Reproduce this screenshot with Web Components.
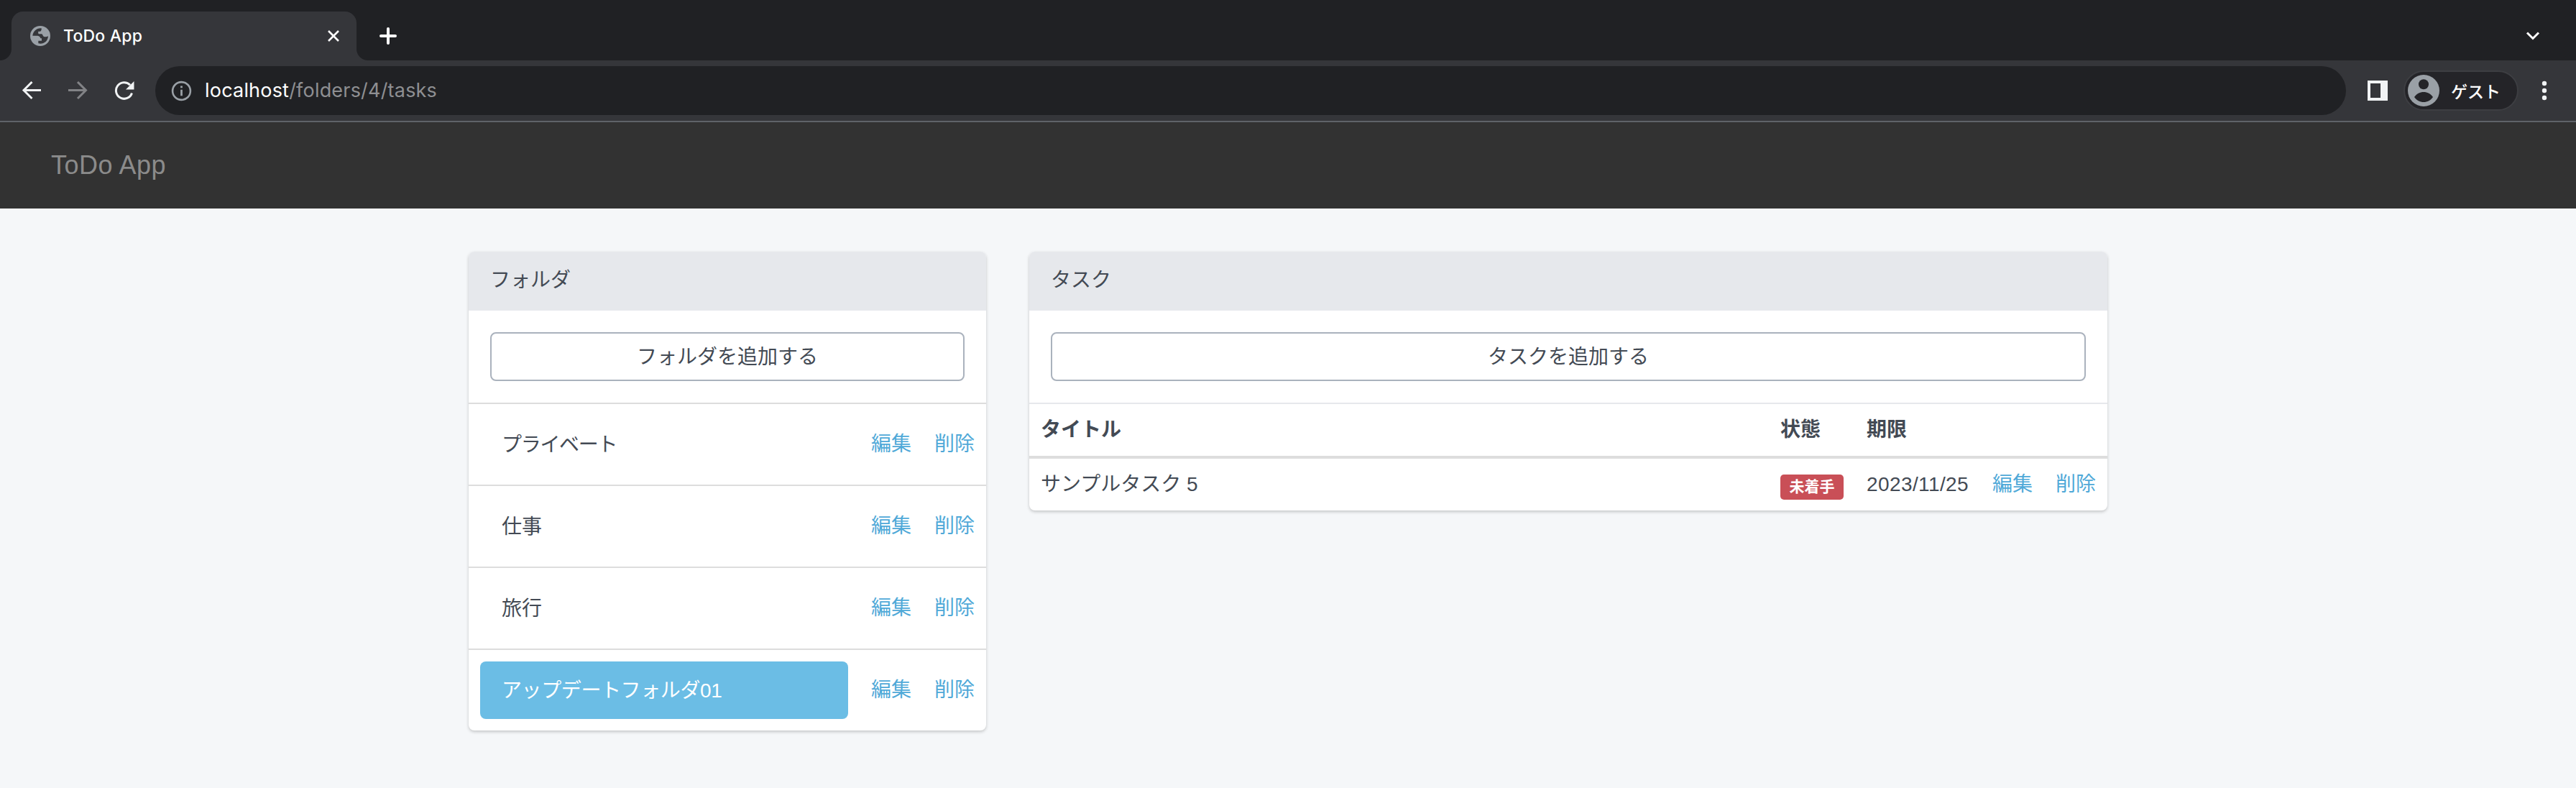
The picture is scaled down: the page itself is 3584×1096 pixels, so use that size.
<!DOCTYPE html>
<html lang="ja"><head><meta charset="utf-8"><title>ToDo App</title>
<style>
body{margin:0;background:#f5f7f9;font-family:"Liberation Sans","Noto Sans CJK JP",sans-serif;color:#434a54;font-size:28px;height:1096px;overflow:hidden}
main{width:2280px;margin:60px auto 0;display:flex;gap:60px;align-items:flex-start}
</style></head><body>
<browser-chrome></browser-chrome>
<app-navbar>ToDo App</app-navbar>
<main>
<app-panel heading="フォルダ" action="フォルダを追加する" style="width:720px">
<folder-row style="letter-spacing:-1.3px">プライベート</folder-row><folder-row>仕事</folder-row><folder-row>旅行</folder-row><folder-row active>アップデートフォルダ01</folder-row>
</app-panel>
<app-panel heading="タスク" action="タスクを追加する" style="width:1500px"><task-table></task-table></app-panel>
</main>
<script>
const define=(name,html)=>customElements.define(name,class extends HTMLElement{
 connectedCallback(){
  if(this.shadowRoot)return;
  const t=document.createElement('template');
  t.innerHTML=html.replace(/\{\{(\w+)\}\}/g,(m,k)=>this.getAttribute(k)||'');
  this.attachShadow({mode:'open'}).append(t.content.cloneNode(true));}});

define('browser-chrome',`<style>
:host{display:block;color:#fff}
svg{display:block;flex:none}
.strip{height:84px;background:#202124;display:flex;align-items:flex-end}
.tab{width:480px;height:68px;margin-left:16px;background:#35363a;border-radius:16px 16px 0 0;display:flex;align-items:center;position:relative;font:500 23px Inter,"Liberation Sans",sans-serif;flex:none}
.tab:before,.tab:after{content:"";position:absolute;bottom:0;width:16px;height:16px}
.tab:before{left:-16px;background:radial-gradient(circle at 0 0,#202124 15.5px,#35363a 16.5px)}
.tab:after{right:-16px;background:radial-gradient(circle at 100% 0,#202124 15.5px,#35363a 16.5px)}
.globe{margin-left:26px}.name{margin-left:18px;letter-spacing:.2px;flex:1}
.x{margin-right:24px}.plus{margin:0 0 22px 32px}.down{margin:0 50px 28px auto}
.bar{height:84px;background:#35363a;border-bottom:2px solid #5f6368;display:flex;align-items:center}
.back{margin-left:30px}.fwd{margin-left:37px}.re{margin-left:36px}
.url{margin-left:28px;width:3048px;height:68px;border-radius:34px;background:#202124;display:flex;align-items:center;font:400 27px Inter,"Liberation Sans",sans-serif}
.url svg{margin-left:22px}.url span{margin:-1px 0 0 18px;color:#8e8f92;letter-spacing:.2px}.url b{font-weight:400;color:#fff}
.side{margin-left:30px}
.guest{margin-left:22px;box-sizing:border-box;width:160px;height:56px;border:2px solid #3d3e42;border-radius:28px;background:#242428;display:flex;align-items:center;font:500 23px "Noto Sans CJK JP",sans-serif}
.guest svg{margin:0 16px 0 4px}.guest span{margin-top:-1px}
.dots{margin-left:32px}
</style>
<div class="strip"><div class="tab">
<svg class="globe" width="28" height="28" viewBox="0 0 84 84"><circle cx="42" cy="42" r="42" fill="#9aa0a6"/><path d="M47 10C28 8 12 22 10 41H27C38 41 42 46 43 52H48V62H34V73C54 78 74 66 75 43C69 46 62 47 56 44C52 41 52 36 49 34H36C33 32 33 27 34 23H42C46 22 48 16 47 10z" fill="#35363a"/></svg>
<span class="name">ToDo App</span>
<svg class="x" width="16" height="16" viewBox="0 0 16 16" stroke="#fff" stroke-width="2.600"><path d="M1 1l14 14M15 1L1 15"/></svg></div>
<svg class="plus" width="24" height="24" viewBox="0 0 24 24" stroke="#fff" stroke-width="4" stroke-linecap="round"><path d="M12 2v20M2 12h20"/></svg>
<svg class="down" width="20" height="12" viewBox="0 0 20 12" fill="none" stroke="#fff" stroke-width="3"><path d="M2 1.500l8 8 8-8"/></svg></div>
<div class="bar">
<svg class="back" width="28" height="26" viewBox="0 0 28 26" fill="none" stroke="#f1f3f4" stroke-width="3"><path d="M27 12.500H4M14.500 1L3 12.500 14.500 24"/></svg>
<svg class="fwd" width="28" height="26" viewBox="0 0 28 26" fill="none" stroke="#828386" stroke-width="3"><path d="M0 12.500h25M13 1L24.500 12.500 13 24"/></svg>
<svg class="re" width="29" height="28" viewBox="0 0 29 28"><path d="M24.500 17.500A11.300 11.300 0 1 1 22 6.300" fill="none" stroke="#f1f3f4" stroke-width="3"/><path d="M27.500 1v11.500H16z" fill="#f1f3f4"/></svg>
<div class="url"><svg width="29" height="29" viewBox="0 0 29 29"><circle cx="14.500" cy="14.500" r="12.400" fill="none" stroke="#9aa0a6" stroke-width="2.600"/><path d="M13.100 7.500h2.800v2.800h-2.800zM13.100 12.800h2.800v8.500h-2.800z" fill="#9aa0a6"/></svg><span><b>localhost</b>/folders/4/tasks</span></div>
<svg class="side" width="28" height="28" viewBox="0 0 28 28"><path d="M0 0h28v28H0zM4 4v20h14V4z" fill="#f1f3f4" fill-rule="evenodd"/></svg>
<div class="guest"><svg width="44" height="44" viewBox="0 0 44 44"><circle cx="22" cy="22" r="22" fill="#9aa0a6"/><circle cx="22" cy="13.300" r="7" fill="#242428"/><path d="M9 31c3-4.500 8-7 13-7s10 2.500 13 7c-3 4.500-8 7-13 7s-10-2.500-13-7z" fill="#242428"/></svg><span>ゲスト</span></div>
<svg class="dots" width="8" height="28" viewBox="0 0 8 28" fill="#f1f3f4" overflow="visible"><circle cx="4" cy="4" r="3.200"/><circle cx="4" cy="14" r="3.200"/><circle cx="4" cy="24" r="3.200"/></svg>
</div>`);

define('app-navbar',`<style>:host{display:flex;align-items:center;box-sizing:border-box;height:120px;padding:0 71px;background:#323232;color:#8b8b8b;font-size:36px;letter-spacing:.5px}</style><slot></slot>`);

define('app-panel',`<style>
:host{display:block;background:#fff;border-radius:8px;box-shadow:0 2px 4px rgba(0,0,0,.2);overflow:hidden;flex:none}
header{height:82px;background:#e6e8ec;padding:0 30px;line-height:80px}
.body{padding:30px}
.btn{height:64px;border:2px solid #aab2bd;border-radius:8px;text-align:center;line-height:65px}
</style><header>{{heading}}</header><div class="body"><div class="btn">{{action}}</div></div><slot></slot>`);

define('folder-row',`<style>
:host{display:flex;align-items:center;box-sizing:border-box;height:114px;border-top:2px solid #ddd;padding:0 16px}
.name{box-sizing:border-box;width:512px;height:80px;line-height:81px;padding-left:30px;border-radius:8px}
:host([active]) .name{background:#6bbde5;color:#fff;letter-spacing:-.4px}
nav{display:flex;gap:32px;margin-left:32px;color:#4fa9d8;line-height:40px;letter-spacing:0}
</style><div class="name"><slot></slot></div><nav><span>編集</span><span>削除</span></nav>`);

define('task-table',`<style>
:host{display:block}
.row{display:grid;grid-template-columns:1029px 120px 175px 88px 1fr;padding-left:16px;align-items:center;height:72px;line-height:40px}
.head{font-weight:700;border-top:2px solid #e6e8ec;border-bottom:4px solid #ddd}
.row a{color:#4fa9d8}
.date{letter-spacing:.4px}
.badge{display:inline-block;width:88px;height:35px;line-height:34px;border-radius:5px;background:#c94f57;color:#fff;font-weight:700;font-size:21px;text-align:center;margin-top:7px}
</style>
<div class="row head"><span>タイトル</span><span>状態</span><span>期限</span></div>
<div class="row"><span>サンプルタスク 5</span><span class="badge">未着手</span><span class="date">2023/11/25</span><a>編集</a><a>削除</a></div>`);
</script></body></html>
